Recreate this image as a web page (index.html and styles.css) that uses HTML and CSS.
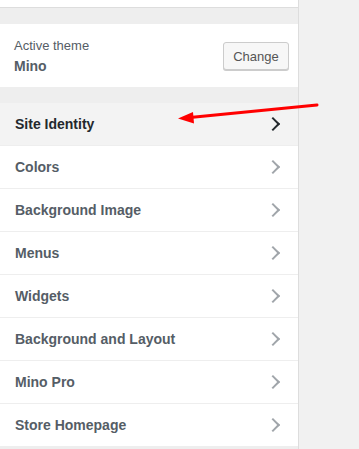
FILE: index.html
```html
<!DOCTYPE html>
<html>
<head>
    <title>Customize</title>
    <link rel="stylesheet" href="styles.css">
</head>
<body>
    <div class="sidebar">
        <div class="top-bar"></div>

        <div class="theme-info">
            <div class="theme-text">
                <span class="theme-label">Active theme</span>
                <span class="theme-name">Mino</span>
            </div>
            <button type="button" class="change-btn">Change</button>
        </div>

        <ul class="sections">
            <li class="section active">Site Identity <span class="chevron"></span></li>
            <li class="section">Colors <span class="chevron"></span></li>
            <li class="section">Background Image <span class="chevron"></span></li>
            <li class="section">Menus <span class="chevron"></span></li>
            <li class="section">Widgets <span class="chevron"></span></li>
            <li class="section">Background and Layout <span class="chevron"></span></li>
            <li class="section">Mino Pro <span class="chevron"></span></li>
            <li class="section">Store Homepage <span class="chevron"></span></li>
        </ul>
    </div>

    <!-- annotation arrow -->
    <svg class="arrow" width="359" height="449" viewBox="0 0 359 449">
        <line x1="317" y1="105" x2="190" y2="117.5" stroke="#f00" stroke-width="3" stroke-linecap="round" />
        <polygon points="178,118.5 193,112 194,123.5" fill="#f00" />
    </svg>
</body>
</html>
```

FILE: styles.css
```css
body {
    margin: 0;
    background-color: #f1f1f1;
    font-family: "Liberation Sans", Arial, sans-serif;
    color: #555d66;
}

.sidebar {
    width: 298px;
    height: 449px;
    background-color: #eee;
    border-right: 1px solid #ddd;
}

.top-bar {
    height: 7px;
    background-color: #fff;
    border-bottom: 1px solid #ddd;
}

.theme-info {
    margin-top: 16px;
    height: 63px;
    background-color: #fff;
    display: flex;
    align-items: center;
    justify-content: space-between;
    padding: 0 9px 0 14px;
    box-sizing: border-box;
}

.theme-text {
    display: flex;
    flex-direction: column;
    gap: 5px;
    padding-top: 1px;
}

.theme-label {
    font-size: 13px;
}

.theme-name {
    font-size: 14px;
    font-weight: bold;
}

.change-btn {
    font-family: inherit;
    font-size: 13px;
    color: #555;
    background-color: #f7f7f7;
    border: 1px solid #ccc;
    border-radius: 3px;
    box-shadow: 0 1px 0 #ccc;
    height: 28px;
    width: 66px;
    padding: 0;
    margin-top: 1px;
}

.sections {
    list-style: none;
    margin: 16px 0 0 0;
    padding: 0;
}

.section {
    height: 42px;
    border-bottom: 1px solid #eee;
    background-color: #fff;
    display: flex;
    align-items: center;
    justify-content: space-between;
    padding: 0 18px 0 15px;
    font-size: 14px;
    font-weight: bold;
    color: #555d66;
}

.section.active {
    background-color: #f3f3f3;
    color: #23282d;
}

.chevron {
    width: 8px;
    height: 8px;
    border-top: 2px solid #a0a5aa;
    border-right: 2px solid #a0a5aa;
    transform: rotate(45deg);
    margin-right: 2px;
}

.section.active .chevron {
    border-color: #23282d;
}

.arrow {
    position: absolute;
    left: 0;
    top: 0;
    pointer-events: none;
}
```
